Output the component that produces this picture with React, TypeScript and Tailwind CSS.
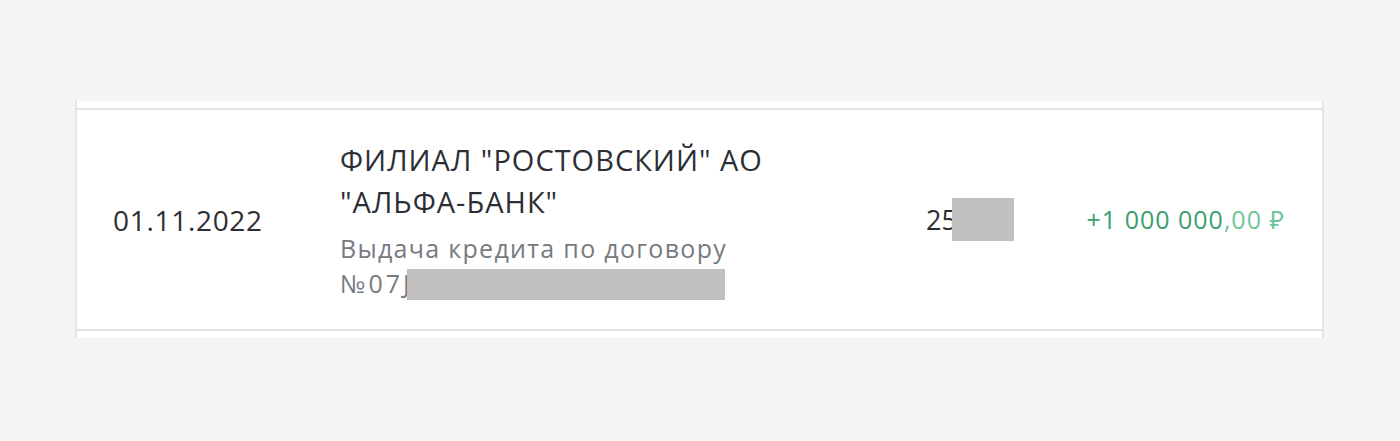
import React from "react";

const font = { fontFamily: '"Open Sans", "Noto Sans", sans-serif' };

const Redacted = ({ className }: { className: string }) => (
  <span className={`inline-block bg-[#c0c0c0] align-middle ${className}`} />
);

const OperationRow = () => {
  return (
    <div className="flex items-center h-[223px] border-y-2 border-[#dfe2e6] pl-[36px] pr-[37px] text-[#2b2f35]">
      <div className="w-[227px] shrink-0 text-[28px] tracking-[0.7px] leading-none">01.11.2022</div>
      <div className="w-[586px] shrink-0 flex flex-col">
        <div className="w-[470px] text-[29px] tracking-[1px] leading-[42px]">
          ФИЛИАЛ "РОСТОВСКИЙ" АО "АЛЬФА-БАНК"
        </div>
        <div className="mt-[8px] w-[420px] text-[25px] tracking-[1.3px] leading-[35px] text-[#767b82]">
          <div>Выдача кредита по договору</div>
          <div className="flex items-center">
            <span className="tracking-[3px]">№07J</span>
            <Redacted className="w-[318px] h-[31px] mt-[2px] -ml-[6px]" />
          </div>
        </div>
      </div>
      <div className="flex items-center text-[27px] leading-none">
        <span>25</span>
        <Redacted className="w-[62px] h-[43px] -ml-[5px]" />
      </div>
      <div className="ml-auto text-[25px] tracking-[1px] leading-none text-[#3b9e6e]">
        +1 000 000<span className="text-[#6fc59b]">,00 ₽</span>
      </div>
    </div>
  );
};

const App = () => {
  return (
    <div className="w-[1400px] h-[441px] bg-[#f4f5f7] pt-[101px] pl-[75px]" style={font}>
      <div className="w-[1249px] bg-white border-x-2 border-[#e4e6e9] pt-[7px] pb-[7px]">
        <OperationRow />
      </div>
    </div>
  );
};

export default App;
